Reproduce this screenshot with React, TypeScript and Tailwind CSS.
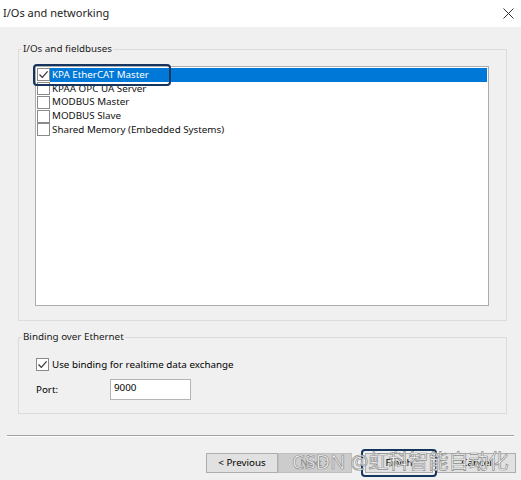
import React from 'react';

const items = [
  { label: 'KPA EtherCAT Master', checked: true, selected: true },
  { label: 'KPAA OPC UA Server', checked: false, selected: false },
  { label: 'MODBUS Master', checked: false, selected: false },
  { label: 'MODBUS Slave', checked: false, selected: false },
  { label: 'Shared Memory (Embedded Systems)', checked: false, selected: false },
];

const CheckBox: React.FC<{ checked: boolean }> = ({ checked }) => (
  <span className="w-[13px] h-[13px] shrink-0 border border-[#8a8a8a] bg-white flex items-center justify-center">
    {checked && (
      <svg width="11" height="11" viewBox="0 0 11 11">
        <path d="M1.5 5.5 L4.3 8.3 L9.6 2.4" fill="none" stroke="#333" strokeWidth="1.2" />
      </svg>
    )}
  </span>
);

const GroupBox: React.FC<{ title: string; className?: string; bodyClass?: string; children: React.ReactNode }> = ({ title, className, bodyClass, children }) => (
  <div className={`border border-[#dcdcdc] ${className ?? ''}`}>
    <div className="-mt-[8px] ml-[3px] w-fit px-[1px] bg-[#f0f0f0] leading-[14px] text-[#1a1a1a]">{title}</div>
    <div className={bodyClass}>{children}</div>
  </div>
);

export default function App() {
  return (
    <div className="w-[521px] h-[480px] bg-[#f0f0f0] text-[9.8px] text-black overflow-hidden relative" style={{ fontFamily: '"Noto Sans", "Noto Sans CJK SC", sans-serif' }}>
      <header className="h-[27px] bg-white flex items-center justify-between pl-[3px] pr-[7px]">
        <span className="text-[11px] text-[#222]">I/Os and networking</span>
        <svg width="11" height="11" viewBox="0 0 11 11">
          <path d="M0.5 0.5 L10.5 10.5 M10.5 0.5 L0.5 10.5" stroke="#333" strokeWidth="1" />
        </svg>
      </header>

      <div className="pl-[18px] pr-[14px]">
        <GroupBox title="I/Os and fieldbuses" className="mt-[22px]" bodyClass="pl-[16px] pr-[17px] pb-[14px]">
          <div className="relative mt-[10px] h-[240px] border border-[#adadad] bg-white pt-[1px] pl-[1px] pr-[1px]">
            {items.map(item => (
              <div key={item.label} className="h-[13.75px] flex items-center">
                <CheckBox checked={item.checked} />
                <span className={`flex-1 h-full flex items-center pl-[2px] leading-none ${item.selected ? 'bg-[#0078d7] text-white' : 'text-[#111]'}`}>
                  {item.label}
                </span>
              </div>
            ))}
            <div className="absolute left-[-3px] top-[-3px] w-[138px] h-[22px] rounded-[4px] border-[2.5px] border-[#16355e]" />
          </div>
        </GroupBox>

        <GroupBox title="Binding over Ethernet" className="mt-[16px]" bodyClass="pl-[17px] pb-[13px]">
          <label className="mt-[14px] flex items-center gap-[3px] leading-none">
            <CheckBox checked />
            <span>Use binding for realtime data exchange</span>
          </label>
          <div className="mt-[8px] flex items-center">
            <span className="w-[74px] pt-[2px]">Port:</span>
            <div className="w-[81px] h-[21px] border border-[#b4b4b4] bg-white pl-[3px] pt-[1px] leading-[14px]">9000</div>
          </div>
        </GroupBox>
      </div>

      <div className="mx-[7px] mt-[21px] border-t border-[#a0a0a0] border-b border-b-white" />

      <div className="mt-[12px] flex items-center pl-[206px]">
        <button className="w-[72px] h-[20px] bg-[#e1e1e1] border border-[#adadad] leading-none">&lt; Previous</button>
        <button className="w-[74px] h-[20px] bg-[#cccccc] border border-[#bfbfbf] text-[#8a8a8a] leading-none">Next &gt;</button>
        <div className="ml-[9px] w-[76px] h-[28px] rounded-[4px] border-[2.5px] border-[#16355e] flex items-center justify-center">
          <button className="w-[68px] h-[20px] bg-[#e1e1e1] border border-[#adadad] leading-none">Finish</button>
        </div>
        <button className="w-[79px] h-[20px] bg-[#e1e1e1] border border-[#adadad] leading-none">Cancel</button>
      </div>

      <div className="absolute left-[292px] top-[449px] text-[20px] leading-[26px] text-white whitespace-nowrap [-webkit-text-stroke:0.7px_#8c8c8c] pointer-events-none">
        CSDN @虹科智能自动化
      </div>
    </div>
  );
}
